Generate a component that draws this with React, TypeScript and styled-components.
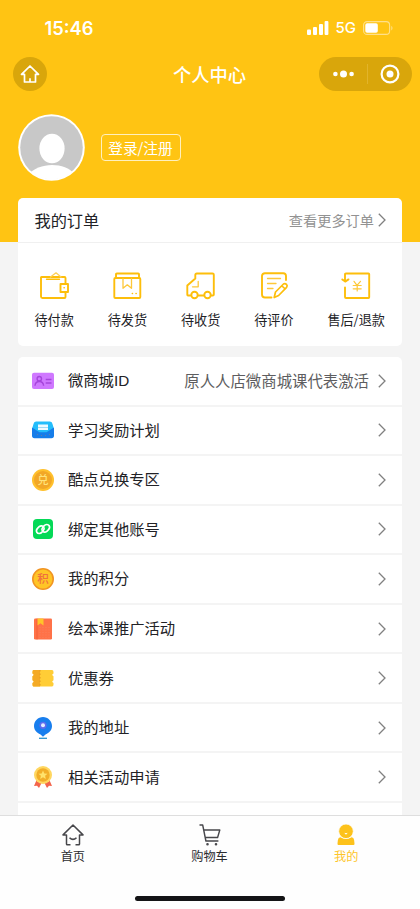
import React from "react";
import styled, { createGlobalStyle } from "styled-components";

const YELLOW = "#ffc413";
const ICON_YELLOW = "#fdbe0b";

const GlobalStyle = createGlobalStyle`
  * { box-sizing: border-box; }
  html, body { margin: 0; padding: 0; overflow: hidden; }
  body {
    font-family: "Noto Sans CJK SC", "Noto Sans", sans-serif;
    color: #222226;
    background: #f4f4f4;
  }
  svg { display: block; flex: none; overflow: visible; }
`;

const Screen = styled.div`
  width: 420px;
  height: 909px;
  display: flex;
  flex-direction: column;
  overflow: hidden;
  background: #f4f4f4;
`;

const Header = styled.header`
  flex: none;
  height: 242px;
  background: ${YELLOW};
  color: #fff;
`;

const StatusBar = styled.div`
  height: 57px;
  padding: 0 27.5px 2px 44.5px;
  display: flex;
  align-items: center;
  justify-content: space-between;
  font-family: Inter, sans-serif;
`;

const Clock = styled.span`
  font-size: 18.3px;
  font-weight: 600;
`;

const StatusIcons = styled.div`
  display: flex;
  align-items: center;
  gap: 6.5px;
`;

const Network = styled.span`
  font-size: 15px;
  font-weight: 500;
  line-height: 18px;
`;

const NavBar = styled.div`
  height: 34px;
  padding: 0 8px 0 13px;
  display: grid;
  grid-template-columns: 93px 1fr 93px;
  align-items: center;
`;

const HomeButton = styled.button`
  width: 34px;
  height: 34px;
  padding: 0;
  border: 0;
  border-radius: 50%;
  background: #d9a60b;
  display: grid;
  place-items: center;
`;

const Title = styled.h1`
  margin: 0;
  font-size: 18.3px;
  line-height: 34px;
  font-weight: 500;
  text-align: center;
  padding-right: 6px;
`;

const Capsule = styled.div`
  height: 34px;
  border-radius: 17px;
  background: #d9a60b;
  display: grid;
  grid-template-columns: 48px 1px 1fr;
  justify-items: center;
  align-items: center;
  padding-right: 1px;
`;

const CapsuleRule = styled.i`
  width: 1px;
  height: 20px;
  background: #e2b42b;
`;

const Profile = styled.div`
  margin-top: 23px;
  padding-left: 18px;
  display: flex;
  align-items: center;
  gap: 16px;
`;

const LoginButton = styled.button`
  height: 27px;
  width: 80px;
  padding: 0 1px 0 0;
  border: 1.5px solid #fff0be;
  border-radius: 4px;
  background: transparent;
  color: #fff;
  font: 400 14.7px/24px "Noto Sans CJK SC", sans-serif;
  white-space: nowrap;
`;

const Content = styled.main`
  flex: 1;
  min-height: 0;
  margin-top: -44px;
  padding: 0 18px;
  overflow: hidden;
`;

const Card = styled.section`
  background: #fff;
  border-radius: 5px;
  overflow: hidden;
`;

const OrderCard = styled(Card)`
  height: 148px;
  margin-bottom: 11px;
`;

const OrderHead = styled.div`
  height: 45px;
  padding: 0 16.5px 0 16.5px;
  border-bottom: 1px solid #f0f0f0;
  display: flex;
  align-items: center;
  justify-content: space-between;
  font-size: 16.2px;
`;

const MoreOrders = styled.a`
  display: flex;
  align-items: center;
  gap: 3.5px;
  font-size: 14.2px;
  color: #929292;
`;

const OrderTypes = styled.div`
  padding: 29px 17px 0 16.5px;
  display: flex;
  justify-content: space-between;
`;

const OrderType = styled.div`
  display: flex;
  flex-direction: column;
  align-items: center;
  gap: 9px;
  font-size: 13.1px;
  line-height: 22px;

  svg {
    margin-left: 1.5px;
  }
`;

const Row = styled.div`
  height: 49.55px;
  padding: 0 16.5px 0 14px;
  border-bottom: 2px solid #f4f4f4;
  display: flex;
  align-items: center;
`;

const RowLabel = styled.span`
  flex: 1;
  margin-left: 14px;
  margin-top: 1px;
  font-family: "Liberation Sans", "Noto Sans CJK SC", sans-serif;
  font-size: 15.3px;
  line-height: 22px;
`;

const RowValue = styled.span`
  margin-right: 8.5px;
  padding-bottom: 2px;
  font-size: 15.4px;
  line-height: 22px;
  color: #5d5d60;
`;

const Footer = styled.footer`
  flex: none;
  height: 94px;
  background: #fefefe;
  border-top: 1px solid #dedede;
  display: flex;
  flex-direction: column;
  align-items: center;
  justify-content: space-between;
  padding: 8px 0 8px;
`;

const Tabs = styled.nav`
  width: 410px;
  margin-right: 1px;
  display: flex;
`;

const Tab = styled.a<{ $active?: boolean }>`
  flex: 1;
  display: flex;
  flex-direction: column;
  align-items: center;
  gap: 1px;
  font-size: 12.2px;
  line-height: 18px;
  color: ${(p) => (p.$active ? "#fdc52a" : "#2c2c30")};
`;

const HomeIndicator = styled.div`
  width: 150px;
  height: 5.5px;
  border-radius: 3px;
  background: #141416;
`;

const Chevron = ({ color = "#808080" }: { color?: string }) => (
  <svg width="8" height="14" viewBox="0 0 8 14" fill="none" stroke={color} strokeWidth="1.3">
    <path d="M.8.7 7 7 .8 13.3" />
  </svg>
);

const Signal = () => (
  <svg width="22" height="14" viewBox="0 0 22 14" fill="#fff">
    <rect x="0" y="8.5" width="4" height="5.5" rx="1" />
    <rect x="6" y="6" width="4" height="8" rx="1" />
    <rect x="12" y="3" width="4" height="11" rx="1" />
    <rect x="17.6" y="0" width="3.8" height="14" rx="1" />
  </svg>
);

const Battery = () => (
  <svg width="30" height="14" viewBox="0 0 30 14">
    <rect x=".6" y=".6" width="26" height="12.8" rx="3.5" fill="none" stroke="#ffe08a" strokeWidth="1.1" />
    <rect x="2.3" y="2.3" width="12.5" height="9.4" rx="1.8" fill="#fff" />
    <path d="M28.3 4.8c1.6.8 1.6 3.8 0 4.6z" fill="#ffe08a" />
  </svg>
);

const NavHome = () => (
  <svg width="20" height="19" viewBox="0 0 20 19" fill="none" stroke="#fff" strokeWidth="1.7" strokeLinejoin="round">
    <path d="M10 1 1.5 9.3h3V17h11V9.3h3z" />
    <path d="M10 13.2V17" />
  </svg>
);

const Avatar = () => (
  <svg width="67" height="67" viewBox="0 0 67 67">
    <defs>
      <clipPath id="face"><circle cx="33.5" cy="33.5" r="32" /></clipPath>
    </defs>
    <circle cx="33.5" cy="33.5" r="33.3" fill="#fff" />
    <circle cx="33.5" cy="33.5" r="31.3" fill="#c8c8c8" />
    <g clipPath="url(#face)" fill="#fff">
      <ellipse cx="34" cy="34.5" rx="12.6" ry="14.8" />
      <path d="M10 61c5-6.500 15-10 24-10s18 3 22 9v10H10z" />
    </g>
  </svg>
);

const orderIcon = {
  width: 30,
  height: 28,
  viewBox: "0 0 30 28",
  fill: "none",
  stroke: ICON_YELLOW,
  strokeWidth: 1.9,
  strokeLinejoin: "round" as const,
  strokeLinecap: "round" as const,
};

const Wallet = () => (
  <svg {...orderIcon}>
    <path d="M25.500 11V6q0-1-1-1H1.500q-.5 0-.5.6V24.500q0 1.500 1.500 1.500h22q1 0 1-1V20" />
    <path d="M6.500 7.200h13" strokeWidth="1.4" />
    <path d="M10.500 5l5.500-4.200L21 5" strokeWidth="1.3" stroke="#fdd05a" />
    <rect x="20.500" y="12" width="7.500" height="8" />
    <path d="M24 15.800h.3" strokeWidth="1.5" />
  </svg>
);

const Parcel = () => (
  <svg {...orderIcon}>
    <path d="M3 6V2.300q0-.8.8-.8h21.400q.8 0 .8.8V6" />
    <rect x="1.300" y="6" width="26" height="20" rx="1" />
    <path d="M10 6.500v9.800l4.300-3.500 4.200 3.500V6.500" strokeWidth="1.3" stroke="#fdc83a" />
    <path d="M19.300 21.500h.2M23 21.500h.2" strokeWidth="1.5" />
  </svg>
);

const Truck = () => (
  <svg {...orderIcon}>
    <path d="M4.500 23.500H2q-.7 0-.7-1V13.500l8-7V3q0-1.500 1.500-1.500h15.700q1.300 0 1.300 1.300V22.500q0 1-1 1h-1.500M12.500 23.500H18" />
    <circle cx="8.500" cy="23" r="3.200" />
    <circle cx="21.500" cy="23" r="3.200" />
    <path d="M12.200 9.500v5.300H6.500" strokeWidth="1.300" stroke="#fdc83a" />
  </svg>
);

const Review = () => (
  <svg {...orderIcon}>
    <path d="M26 8V4q0-2.700-2.700-2.700H5Q2 1.300 2 4v18.500Q2 25.500 5 25.500h6.500" />
    <path d="M7.500 6.500H20.500M7.500 11.500H16M7.500 16.500H13" strokeWidth="1.300" stroke="#fdc83a" />
    <path d="M14.200 25.500l1.300-5.500 8-8q1.500-1 3 .4 1.300 1.300.1 2.900l-8 8.200zM22 14l3.200 3" strokeWidth="1.700" />
  </svg>
);

const Refund = () => (
  <svg {...orderIcon}>
    <path d="M3 9V2.500q0-1 1-1h22.500q.7 0 .7.700V25.300q0 .7-.7.7H4q-1 0-1-1V15.500M.3 7.400 3.200 9.600l3.300-2.200" />
    <path d="M12 9.300l3 4L18.500 9.300M11.200 13.500h8M11.200 16.800h8M15.200 13.500V19" strokeWidth="1.200" stroke="#fdc83a" />
  </svg>
);

const menuIcon = { width: 22, height: 22, viewBox: "0 0 22 22" };

const IdCard = () => (
  <svg {...menuIcon}>
    <rect x="0" y="2.700" width="22" height="16.300" rx="2" fill="#cf78ff" />
    <g fill="none" stroke="#a645dc" strokeWidth="1.400">
      <circle cx="7.300" cy="8.700" r="2.200" />
      <path d="M3 15.800q.3-4.300 4.300-4.300t4.300 4.300M13.700 9.500h5.800M13.700 13h5.800" />
    </g>
  </svg>
);

const Inbox = () => (
  <svg {...menuIcon}>
    <path d="M1.500 5q.3-2.500 2.500-2.500h14Q20.200 2.500 20.500 5L22 10v4H0v-4z" fill="#24bdfb" />
    <path d="M6 5.500h10v5.500H6z" fill="#effaff" />
    <path d="M6 8.500h10" stroke="#8fd0f2" strokeWidth=".8" />
    <path d="M0 8.500l7.500 4.800h7L22 8.500v8q0 2.800-2.500 2.800h-17Q0 19.300 0 16.500z" fill="#167de9" />
    <path d="M5 15.500h1M9 16.500h1M13 16.500h1M17 15.500h1" stroke="#637ca8" />
  </svg>
);

const CoinText = styled.text`
  font-family: "Noto Sans CJK SC", sans-serif;
  font-weight: 500;
`;

const ExchangeCoin = () => (
  <svg {...menuIcon}>
    <circle cx="11" cy="11" r="11" fill="#ffc02c" />
    <circle cx="11" cy="11" r="9" fill="#f2a727" />
    <CoinText x="11" y="15" fontSize="11" textAnchor="middle" fill="#ffe37b">兑</CoinText>
  </svg>
);

const LinkTile = () => (
  <svg {...menuIcon}>
    <rect x="1" y="1" width="20" height="20" rx="4" fill="#04d957" />
    <g fill="none" stroke="#fff" strokeWidth="1.700" strokeLinecap="round">
      <path d="M10 14.200c-1.700 1.800-4.200 1.600-5.200 0-.8-1.500-.3-2.900.9-4.100l1.500-1.400c1.500-1.300 3.600-1.100 4.500.4.700 1.200.4 2.500-.4 3.400" />
      <path d="M12 7.800c1.700-1.800 4.200-1.600 5.200 0 .8 1.500.3 2.900-.9 4.100l-1.500 1.400c-1.500 1.300-3.600 1.100-4.500-.4-.7-1.200-.4-2.500.4-3.400" />
    </g>
  </svg>
);

const PointsCoin = () => (
  <svg {...menuIcon}>
    <circle cx="11" cy="11" r="10.200" fill="#ffc526" stroke="#f19422" strokeWidth="1.600" />
    <CoinText x="11" y="15.200" fontSize="11.500" textAnchor="middle" fill="#f0703e">积</CoinText>
  </svg>
);

const Book = () => (
  <svg {...menuIcon}>
    <rect x="2" y=".5" width="18" height="21" rx="1.200" fill="#ff7248" />
    <path d="M5 .5v21" stroke="#f15b35" strokeWidth=".8" />
    <path d="M5.500.5h6v7L8.500 5.300l-3 2.200z" fill="#ffc42a" />
    <path d="M8 9v12M11 9v12M14 9v12M17 9v12" stroke="#f8805c" strokeDasharray="1 1.500" />
  </svg>
);

const Coupon = () => (
  <svg {...menuIcon}>
    <path d="M1.500 3H20q1.500 0 1.500 2v1.500q-2.500 1.300 0 2.800v4q-2.500 1.300 0 2.700v1.500q0 2-1.500 2H1.500Q.5 19.500.5 17.500V16q2.500-1.300 0-2.700v-4q2.500-1.500 0-2.800V5q0-2 1-2z" fill="#ffcd36" />
    <path d="M1.500 3H8v16.500H1.500Q.5 19.500.5 17.500V16q2.500-1.300 0-2.700v-4q2.500-1.500 0-2.800V5q0-2 1-2z" fill="#f4aa26" />
    <path d="M8 3v16.500" stroke="#e49a23" strokeDasharray="1.500 2" />
  </svg>
);

const Pin = () => (
  <svg {...menuIcon}>
    <path d="M11 0C6 0 2 4 2 9c0 4.200 3.200 7 6.200 8.300L11 19.800l2.800-2.500C16.800 16 20 13.200 20 9c0-5-4-9-9-9z" fill="#187eee" />
    <circle cx="11" cy="8.300" r="3.600" fill="#5d6bee" />
    <circle cx="11" cy="8.300" r="2" fill="#e0ecff" />
    <path d="M7 21.300h8" stroke="#2a92cf" strokeWidth="1.300" />
  </svg>
);

const Medal = () => (
  <svg {...menuIcon}>
    <path d="M5 13l-3 7 3-.3L7 22l3-6zM17 13l3 7-3-.3L15 22l-3-6z" fill="#f3654c" />
    <circle cx="11" cy="9" r="9" fill="#ffd760" />
    <circle cx="11" cy="9" r="6.700" fill="#f2ae28" />
    <path d="M11 4.500l1.300 2.900 3.200.3-2.400 2.100.7 3.100-2.800-1.600-2.800 1.600.7-3.100-2.400-2.100 3.200-.3z" fill="#ffe26b" />
  </svg>
);

const HomeTab = () => (
  <svg width="22" height="22" viewBox="0 0 22 22" fill="none" stroke="#47474b" strokeWidth="1.500" strokeLinejoin="round">
    <path d="M8.500 20.700H5.300q-.8 0-.8-.8v-9H1L11 1l10 9.900h-3.500v9q0 .8-.8.8h-3.200" />
    <path d="M7.500 13.700q3.500 3.400 7 0" />
  </svg>
);

const CartTab = () => (
  <svg width="22" height="22" viewBox="0 0 22 22" fill="none" stroke="#47474b" strokeWidth="1.400" strokeLinejoin="round">
    <path d="M.5 1h3.200l3.200 16h12.500M4.800 6h16l-2.200 7.500H6.300" />
    <circle cx="8.500" cy="20.300" r=".6" />
    <circle cx="17" cy="20.300" r=".6" />
  </svg>
);

const MeTab = () => (
  <svg width="18" height="22" viewBox="0 0 18 22" fill="#fdc21b">
    <path d="M1.500 21Q.4 21 .5 19.500l.4-3.500q.3-2.500 2.500-2.800 5.600 3 11.200 0 2.200.3 2.500 2.800l.4 3.500Q17.600 21 16.500 21z" />
    <circle cx="9" cy="7.300" r="7.300" stroke="#fefefe" strokeWidth=".8" />
    <path d="M7.500 8.800q1.500.8 3 0-.3 1.700-1.500 1.700T7.500 8.800z" fill="#fff" />
  </svg>
);

const orderTypes = [
  { label: "待付款", Icon: Wallet },
  { label: "待发货", Icon: Parcel },
  { label: "待收货", Icon: Truck },
  { label: "待评价", Icon: Review },
  { label: "售后/退款", Icon: Refund },
];

const menu = [
  { label: "微商城ID", Icon: IdCard, value: "原人人店微商城课代表激活" },
  { label: "学习奖励计划", Icon: Inbox },
  { label: "酷点兑换专区", Icon: ExchangeCoin },
  { label: "绑定其他账号", Icon: LinkTile },
  { label: "我的积分", Icon: PointsCoin },
  { label: "绘本课推广活动", Icon: Book },
  { label: "优惠券", Icon: Coupon },
  { label: "我的地址", Icon: Pin },
  { label: "相关活动申请", Icon: Medal },
];

export default function App() {
  return (
    <Screen>
      <GlobalStyle />
      <Header>
        <StatusBar>
          <Clock>15:46</Clock>
          <StatusIcons>
            <Signal />
            <Network>5G</Network>
            <Battery />
          </StatusIcons>
        </StatusBar>
        <NavBar>
          <HomeButton><NavHome /></HomeButton>
          <Title>个人中心</Title>
          <Capsule>
            <svg width="21" height="8" viewBox="0 0 21 8" fill="#fff">
              <circle cx="2.400" cy="4" r="2.300" />
              <circle cx="10.500" cy="4" r="3.500" />
              <circle cx="18.600" cy="4" r="2.300" />
            </svg>
            <CapsuleRule />
            <svg width="20" height="20" viewBox="0 0 20 20">
              <circle cx="10" cy="10" r="8.400" fill="none" stroke="#fff" strokeWidth="2.200" />
              <circle cx="10" cy="10" r="3.500" fill="#fff" />
            </svg>
          </Capsule>
        </NavBar>
        <Profile>
          <Avatar />
          <LoginButton>登录/注册</LoginButton>
        </Profile>
      </Header>
      <Content>
        <OrderCard>
          <OrderHead>
            我的订单
            <MoreOrders>查看更多订单<Chevron /></MoreOrders>
          </OrderHead>
          <OrderTypes>
            {orderTypes.map(({ label, Icon }) => (
              <OrderType key={label}><Icon />{label}</OrderType>
            ))}
          </OrderTypes>
        </OrderCard>
        <Card>
          {menu.map(({ label, Icon, value }) => (
            <Row key={label}>
              <Icon />
              <RowLabel>{label}</RowLabel>
              {value && <RowValue>{value}</RowValue>}
              <Chevron />
            </Row>
          ))}
          <Row />
        </Card>
      </Content>
      <Footer>
        <Tabs>
          <Tab><HomeTab />首页</Tab>
          <Tab><CartTab />购物车</Tab>
          <Tab $active><MeTab />我的</Tab>
        </Tabs>
        <HomeIndicator />
      </Footer>
    </Screen>
  );
}
